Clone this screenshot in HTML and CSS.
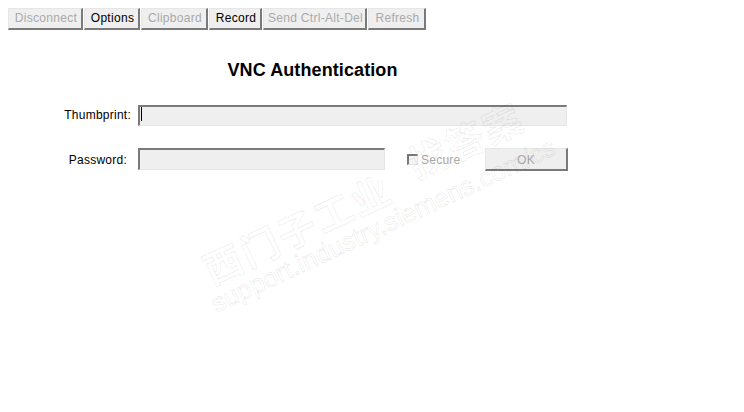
FILE: index.html
```html
<!DOCTYPE html>
<html lang="en">
<head>
<meta charset="utf-8">
<title>VNC Authentication</title>
<link rel="stylesheet" href="styles.css">
</head>
<body>
<div class="toolbar">
  <button class="btn w-disconnect" disabled>Disconnect</button>
  <button class="btn w-options">Options</button>
  <button class="btn w-clipboard" disabled>Clipboard</button>
  <button class="btn w-record">Record</button>
  <button class="btn w-send" disabled>Send Ctrl-Alt-Del</button>
  <button class="btn w-refresh" disabled>Refresh</button>
</div>
<main class="panel">
  <h1 class="title">VNC Authentication</h1>
  <div class="row row-thumb">
    <label class="label label-thumb">Thumbprint:</label>
    <div class="field field-thumb"><span class="caret"></span></div>
  </div>
  <div class="row row-pass">
    <label class="label label-pass">Password:</label>
    <div class="field field-pass"></div>
    <span class="check"></span>
    <span class="secure">Secure</span>
    <button class="btn ok" disabled>OK</button>
  </div>
</main>
<div class="wm wm-a">西门子工业</div>
<div class="wm wm-b">support.industry.siemens.com/cs</div>
<div class="wm wm-c">找答案</div>
</body>
</html>
```
FILE: styles.css
```css
html, body { height: 100%; }
body {
  margin: 0;
  padding: 8px 8px 0;
  box-sizing: border-box;
  background: #fff;
  overflow: hidden;
  position: relative;
  font-family: "Liberation Sans", Arial, sans-serif;
  font-size: 12px;
  letter-spacing: 0.25px;
  color: #000;
}
.toolbar { display: flex; gap: 1px; height: 22px; }
.btn {
  box-sizing: border-box;
  height: 22px;
  margin: 0;
  padding: 0 0 1px 2px;
  background: #efefef;
  border-style: solid;
  border-width: 1px 2px 2px 1px;
  border-color: #e6e6e6 #7a7a7a #7a7a7a #e6e6e6;
  font: 12px "Liberation Sans", Arial, sans-serif;
  letter-spacing: 0.3px;
  color: #000;
}
.btn:disabled { color: #a9a9a9; }
.w-disconnect { width: 75px; }
.w-options { width: 56px; }
.w-clipboard { width: 67px; }
.w-record { width: 53px; }
.w-send { width: 104px; }
.w-refresh { width: 58px; }
.panel { width: 609px; }
.title {
  margin: 29px 0 0;
  height: 22px;
  line-height: 22px;
  font-size: 18px;
  font-weight: bold;
  letter-spacing: 0.1px;
  text-align: center;
}
.row { display: flex; align-items: flex-start; }
.row-thumb { margin-top: 24px; }
.row-pass { margin-top: 22px; }
.label { display: block; text-align: right; line-height: 21px; }
.label-thumb { width: 123px; margin-right: 7px; }
.label-pass { width: 119px; margin-right: 11px; line-height: 24px; }
.field {
  box-sizing: border-box;
  background: #efefef;
  border-style: solid;
  border-width: 2px 1px 1px 2px;
  border-color: #7a7a7a #e6e6e6 #e6e6e6 #7a7a7a;
}
.field-thumb { width: 429px; height: 21px; padding: 0 0 0 1px; }
.field-pass { width: 247px; height: 22px; }
.caret { display: block; width: 1px; height: 14px; background: #000; }
.check {
  box-sizing: border-box;
  width: 11px;
  height: 11px;
  margin: 6px 0 0 22px;
  background: #f4f4f4;
  border-style: solid;
  border-width: 2px 1px 1px 2px;
  border-color: #7a7a7a #e0e0e0 #e0e0e0 #7a7a7a;
}
.secure { margin-left: 3px; line-height: 24px; color: #a9a9a9; }
.ok { width: 83px; height: 23px; margin-left: 24px; padding: 1px 0 0 1px; }
.wm {
  position: absolute;
  transform-origin: 0 0;
  white-space: nowrap;
  letter-spacing: 0;
  color: transparent;
  -webkit-text-stroke: 1px rgba(0, 0, 0, 0.075);
  pointer-events: none;
  transform: rotate(-25deg);
}
.wm-a {
  left: 196px;
  top: 251px;
  font-family: "Noto Sans CJK SC", sans-serif;
  font-size: 38px;
  font-weight: 700;
  line-height: 44px;
  letter-spacing: 2.5px;
}
.wm-b {
  left: 206px;
  top: 291px;
  font-family: "Liberation Sans", sans-serif;
  font-size: 26px;
  line-height: 30px;
}
.wm-c {
  left: 401px;
  top: 145px;
  font-family: "Noto Sans CJK SC", sans-serif;
  font-size: 38px;
  font-weight: 700;
  line-height: 44px;
  letter-spacing: 2.7px;
}
```
